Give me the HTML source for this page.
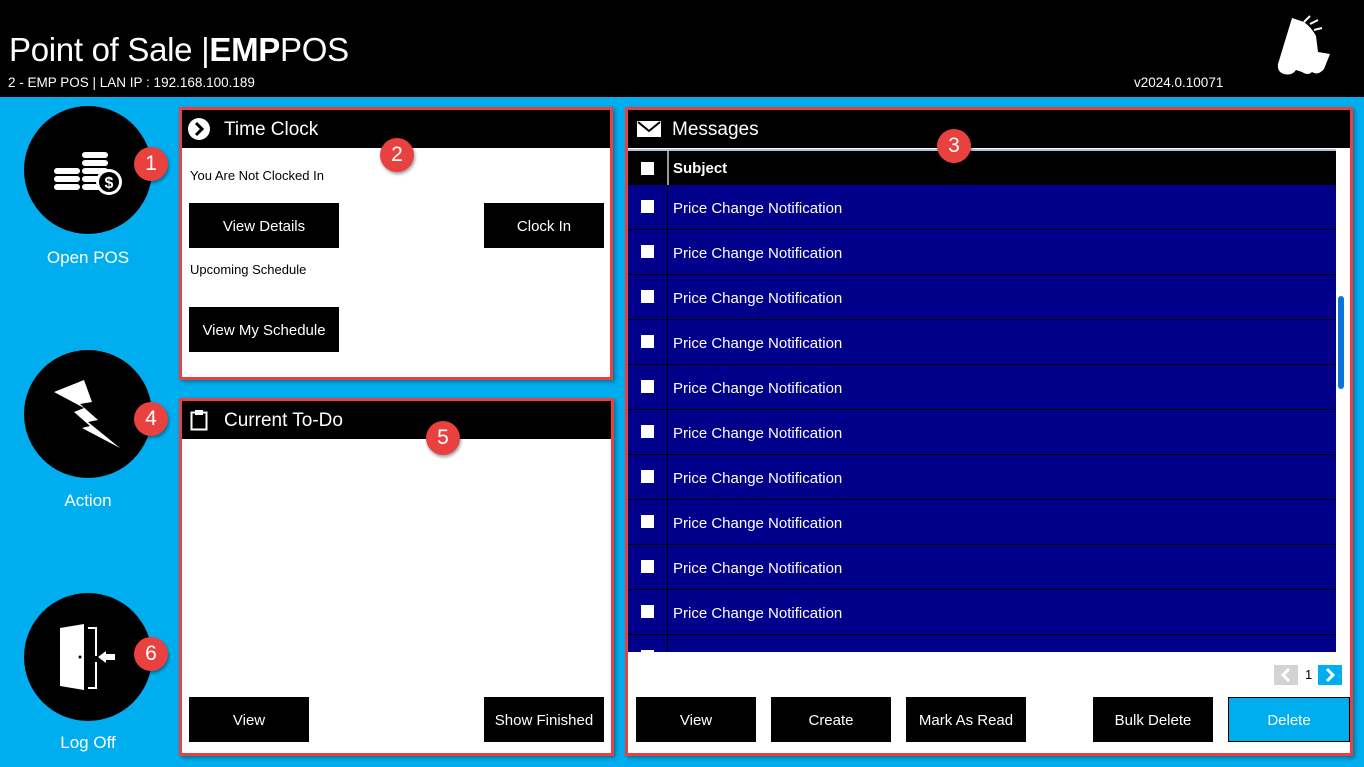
<!DOCTYPE html><html><head><style>
*{margin:0;padding:0;box-sizing:border-box}
body{width:1364px;height:767px;background:#00AEEF;font-family:"Segoe UI","Liberation Sans",sans-serif;position:relative;overflow:hidden;color:#fff}
.a{position:absolute}
.hdr{left:0;top:0;width:1364px;height:97px;background:#000}
.circ{width:128px;height:128px;border-radius:50%;background:#000}
.lbl{width:176px;text-align:center;font-size:17px;left:0}
.badge{width:34px;height:34px;border-radius:50%;background:#E8413F;color:#fff;font-size:21px;text-align:center;line-height:34px;box-shadow:1px 2px 3px rgba(0,0,0,.4)}
.panel{background:#fff;border:3px solid #E8413F;box-shadow:2px 2px 4px rgba(0,0,0,.35)}
.ph{position:absolute;left:0;right:0;top:0;height:38px;background:#000;font-size:19px;line-height:40px}
.btn{position:absolute;background:#000;color:#fff;font-size:15px;text-align:center;line-height:47px;height:45px}
.dk{color:#000;font-size:13px}
.row{position:absolute;left:0;width:708px;height:45px;background:#00008B;font-size:15px;line-height:47px}
.row:after{content:"";position:absolute;left:0;right:0;bottom:0;height:1px;background:#000}
.row .cb{position:absolute;left:13px;top:15px;width:13px;height:13px;background:#fff}
.row .cl{position:absolute;left:39px;top:0;width:1px;height:45px;background:#000}
.row span{position:absolute;left:45px}
</style></head><body>
<div class="a hdr"></div>
<div class="a" style="left:9px;top:28px;font-size:33px;line-height:44px;letter-spacing:-0.3px">Point of Sale |<b>EMP</b>POS</div>
<div class="a" style="left:8px;top:75px;font-size:13.5px">2 - EMP POS | LAN IP : 192.168.100.189</div>
<div class="a" style="left:1134px;top:75px;font-size:13.5px">v2024.0.10071</div>
<svg class="a" style="left:1274px;top:14px" width="62" height="64" viewBox="0 0 62 64"><path d="M18 4 L30 8 Q38 14 42 22 L44 38 L56 40 L50 55 Q44 62 38 58 Q34 62 28 58 L22 56 Q18 62 10 60 Q3 58 4 50 Z" fill="#fff"/><path d="M30 8 L36 2 M36 10 L44 6 M40 16 L48 14" stroke="#fff" stroke-width="2"/></svg>

<div class="a circ" style="left:24px;top:106px"></div>
<svg class="a" style="left:52px;top:148px" width="72" height="48" viewBox="0 0 72 48"><g fill="#fff"><rect x="2" y="20" width="26" height="6" rx="3"/><rect x="2" y="28" width="26" height="6" rx="3"/><rect x="2" y="36" width="26" height="6" rx="3"/><rect x="30" y="4" width="26" height="6" rx="3"/><rect x="30" y="12" width="26" height="6" rx="3"/><rect x="30" y="20" width="26" height="6" rx="3"/><rect x="30" y="28" width="20" height="6" rx="3"/><rect x="30" y="36" width="20" height="6" rx="3"/><circle cx="57" cy="34" r="13"/></g><circle cx="57" cy="34" r="10" fill="#000"/><text x="57" y="40" font-size="16" font-weight="bold" fill="#fff" text-anchor="middle" font-family="Liberation Sans">$</text></svg>
<div class="a lbl" style="top:248px">Open POS</div>
<div class="a circ" style="left:24px;top:350px"></div>
<svg class="a" style="left:52px;top:380px" width="72" height="70"><path d="M2 12 L32 0 L40 22 L28 24 L46 40 L36 42 L68 68 L30 48 L38 46 L22 32 L32 28 Z" fill="#fff"/></svg>
<div class="a lbl" style="top:491px">Action</div>
<div class="a circ" style="left:24px;top:593px"></div>
<svg class="a" style="left:58px;top:622px" width="60" height="72"><path d="M2 6 L26 2 L26 68 L2 64 Z" fill="#fff"/><circle cx="22" cy="35" r="1.5" fill="#000"/><path d="M30 6 L38 6 L38 34 M38 40 L38 66 L30 66" stroke="#fff" stroke-width="2" fill="none"/><path d="M40 35 L48 29 L48 32 L57 32 L57 38 L48 38 L48 41 Z" fill="#fff"/></svg>
<div class="a lbl" style="top:733px">Log Off</div>

<div class="a panel" style="left:179px;top:107px;width:434px;height:273px">
<div class="ph"><svg style="position:absolute;left:6px;top:8px" width="22" height="22"><circle cx="11" cy="11" r="11" fill="#fff"/><path d="M8 5 L14 11 L8 17" stroke="#000" stroke-width="3" fill="none"/></svg><span style="position:absolute;left:42px">Time Clock</span></div>
<div class="a dk" style="left:8px;top:58px">You Are Not Clocked In</div>
<div class="btn" style="left:7px;top:93px;width:150px">View Details</div>
<div class="btn" style="left:302px;top:93px;width:120px">Clock In</div>
<div class="a dk" style="left:8px;top:152px">Upcoming Schedule</div>
<div class="btn" style="left:7px;top:197px;width:150px">View My Schedule</div>
</div>
<div class="a panel" style="left:179px;top:398px;width:435px;height:358px">
<div class="ph"><svg style="position:absolute;left:8px;top:8px" width="18" height="22"><rect x="1.5" y="3.5" width="15" height="17" fill="none" stroke="#fff" stroke-width="2"/><rect x="5" y="1" width="8" height="5" fill="#fff"/></svg><span style="position:absolute;left:42px">Current To-Do</span></div>
<div class="btn" style="left:7px;top:296px;width:120px">View</div>
<div class="btn" style="left:302px;top:296px;width:120px">Show Finished</div>
</div>
<div class="a panel" style="left:625px;top:107px;width:728px;height:649px">
<div class="ph"><svg style="position:absolute;left:9px;top:11px" width="24" height="16"><rect width="24" height="16" fill="#fff"/><path d="M1 1 L12 10 L23 1" stroke="#000" stroke-width="2" fill="none"/></svg><span style="position:absolute;left:44px">Messages</span></div>
<div class="a" style="left:0;top:39px;width:708px;height:36px;background:#000;border-top:2px solid #B0C4DE"><div class="a" style="left:13px;top:11px;width:13px;height:13px;background:#fff"></div><div class="a" style="left:39px;top:0;width:2px;height:34px;background:#999"></div><b class="a" style="left:45px;top:9px;font-size:15px">Subject</b></div>
<div class="a" style="left:0;top:75px;width:708px;height:467px;overflow:hidden">
<div class="row" style="top:0"><div class="cb"></div><div class="cl"></div><span>Price Change Notification</span></div>
<div class="row" style="top:45px"><div class="cb"></div><div class="cl"></div><span>Price Change Notification</span></div>
<div class="row" style="top:90px"><div class="cb"></div><div class="cl"></div><span>Price Change Notification</span></div>
<div class="row" style="top:135px"><div class="cb"></div><div class="cl"></div><span>Price Change Notification</span></div>
<div class="row" style="top:180px"><div class="cb"></div><div class="cl"></div><span>Price Change Notification</span></div>
<div class="row" style="top:225px"><div class="cb"></div><div class="cl"></div><span>Price Change Notification</span></div>
<div class="row" style="top:270px"><div class="cb"></div><div class="cl"></div><span>Price Change Notification</span></div>
<div class="row" style="top:315px"><div class="cb"></div><div class="cl"></div><span>Price Change Notification</span></div>
<div class="row" style="top:360px"><div class="cb"></div><div class="cl"></div><span>Price Change Notification</span></div>
<div class="row" style="top:405px"><div class="cb"></div><div class="cl"></div><span>Price Change Notification</span></div>
<div class="row" style="top:450px"><div class="cb"></div><div class="cl"></div></div>
</div>
<div class="a" style="left:710px;top:186px;width:6px;height:93px;background:#0A74DA;border-radius:3px"></div>
<div class="a" style="left:646px;top:555px;width:24px;height:20px;background:#d3d3d3"><svg width="24" height="20"><path d="M15 4 L9 10 L15 16" stroke="#fff" stroke-width="3" fill="none"/></svg></div>
<div class="a" style="left:677px;top:557px;font-size:13px;color:#000">1</div>
<div class="a" style="left:690px;top:555px;width:24px;height:20px;background:#00AEEF"><svg width="24" height="20"><path d="M9 4 L15 10 L9 16" stroke="#fff" stroke-width="3" fill="none"/></svg></div>
<div class="btn" style="left:8px;top:587px;width:120px">View</div>
<div class="btn" style="left:143px;top:587px;width:120px">Create</div>
<div class="btn" style="left:278px;top:587px;width:120px">Mark As Read</div>
<div class="btn" style="left:465px;top:587px;width:120px">Bulk Delete</div>
<div class="btn" style="left:600px;top:587px;width:122px;background:#00AEEF;border:1px solid #000;line-height:45px">Delete</div>
</div>

<div class="a badge" style="left:134px;top:147px">1</div>
<div class="a badge" style="left:380px;top:138px">2</div>
<div class="a badge" style="left:937px;top:129px">3</div>
<div class="a badge" style="left:134px;top:402px">4</div>
<div class="a badge" style="left:426px;top:421px">5</div>
<div class="a badge" style="left:134px;top:637px">6</div>
</body></html>
